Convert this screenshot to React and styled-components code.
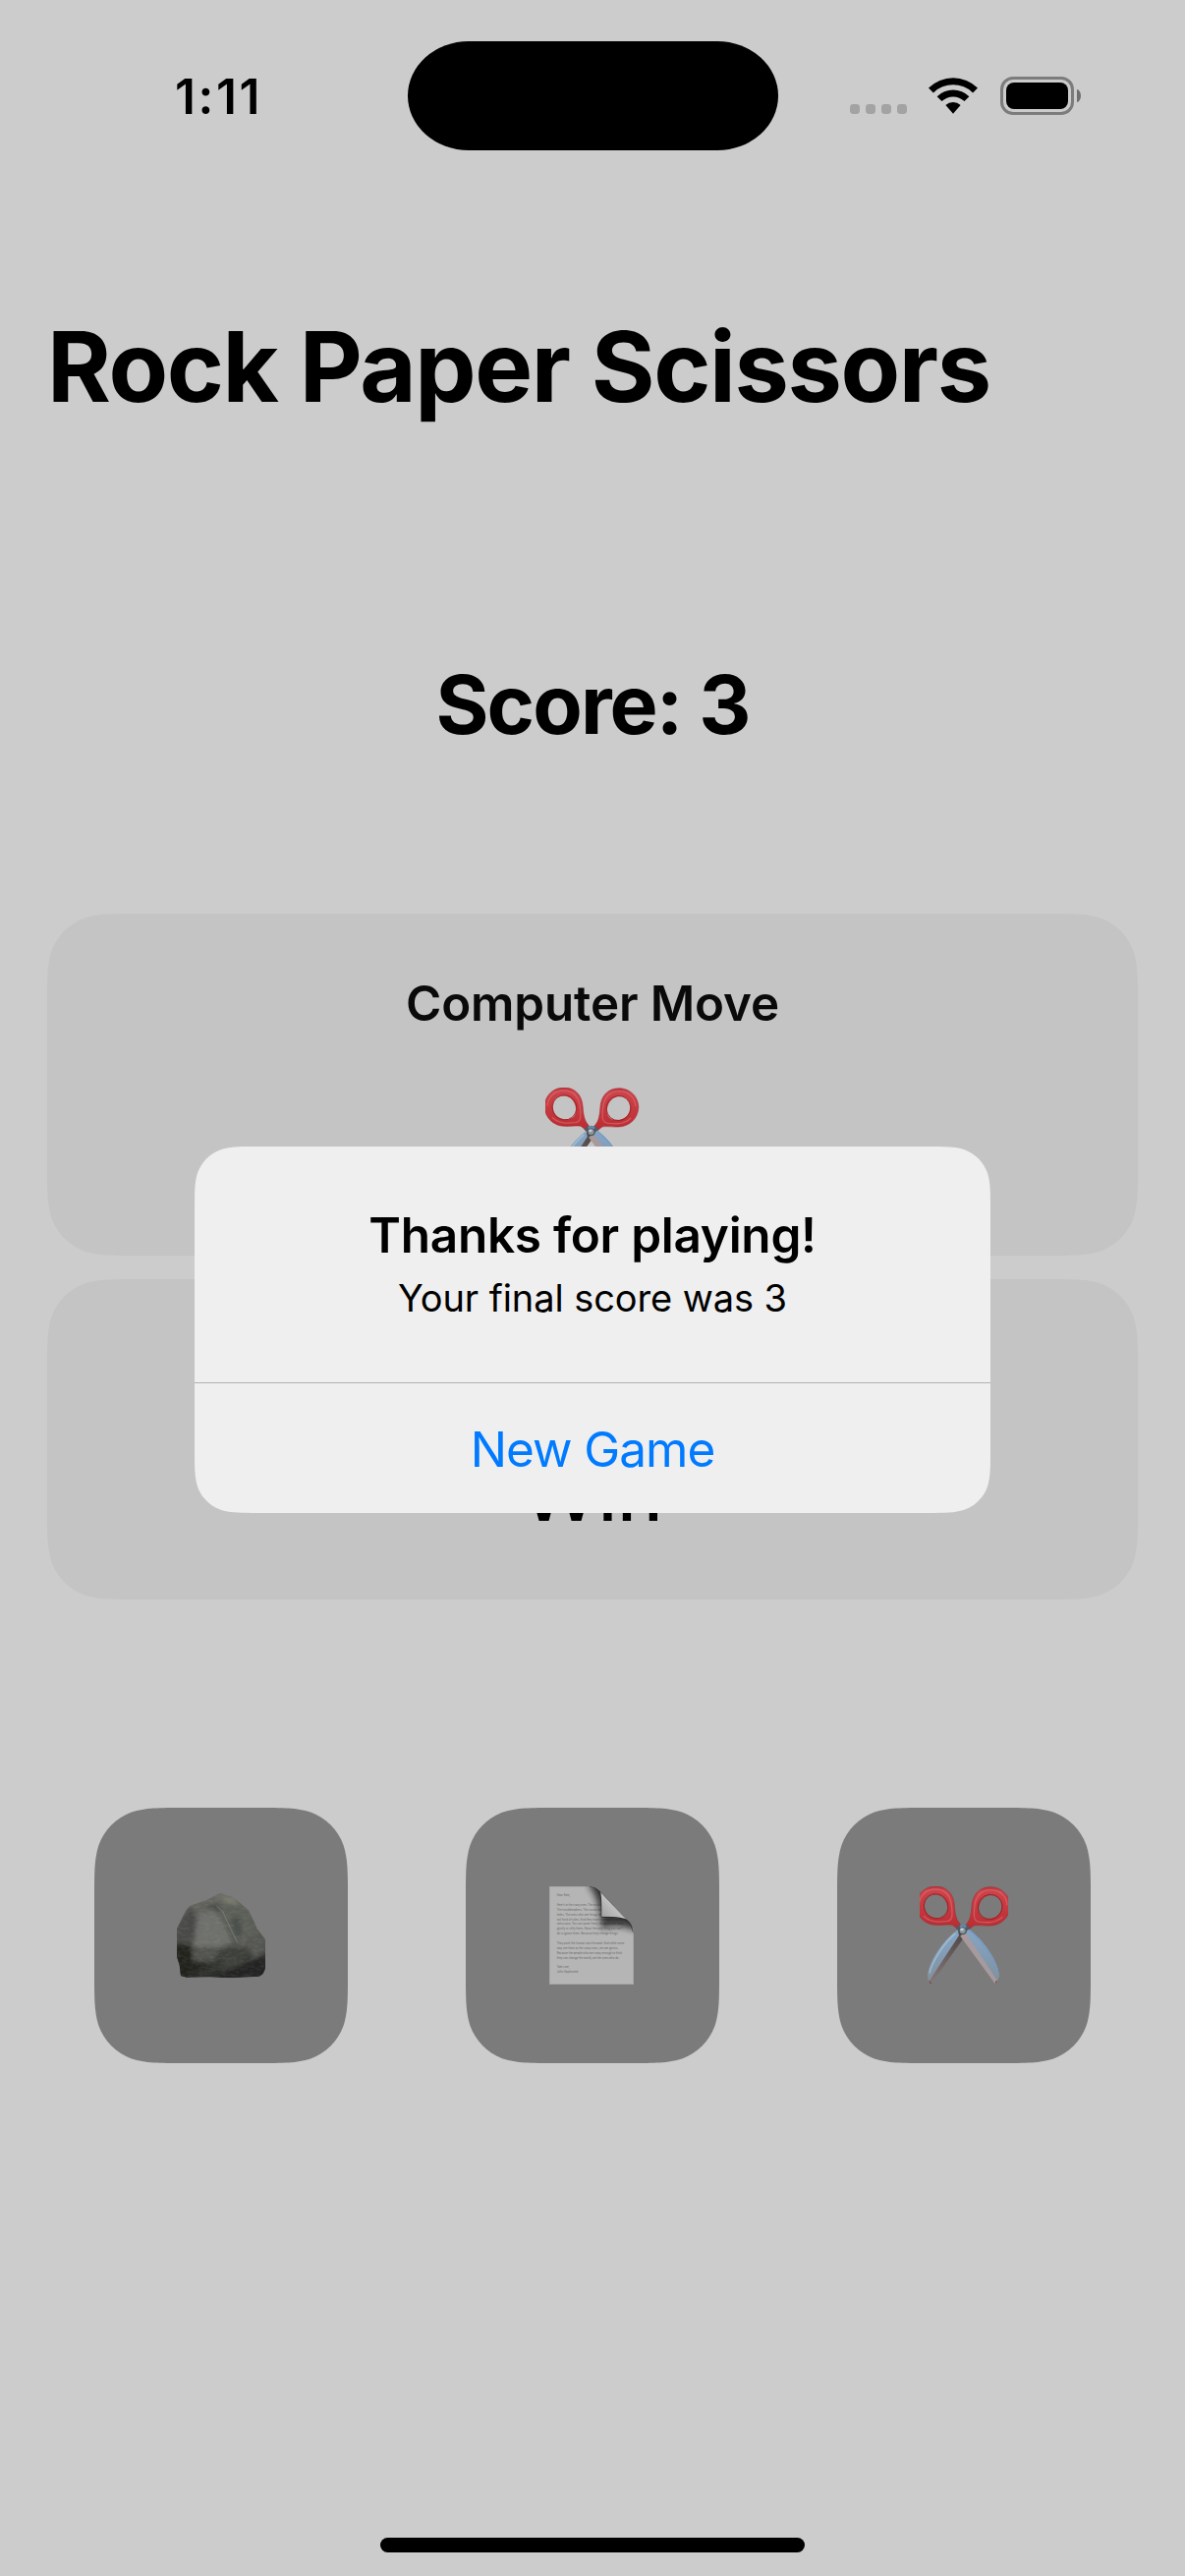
import React from "react";
import styled, { createGlobalStyle, css } from "styled-components";

const GlobalStyle = createGlobalStyle`
  * { box-sizing: border-box; }
  body { margin: 0; background: #cccccc; }
`;

/* Continuous-curvature rounded rectangle, used for every iOS-style surface. */
const squirclePath = (w, h, r) => {
  const k = [1.52866, 1.08849, 0.86841, 0.63149, 0.37282, 0.16906, 0.07491].map((v) => v * r);
  const [a, b, c, d, e, f, g] = k;
  return [
    `M${a} 0L${w - a} 0`,
    `C${w - b} 0 ${w - c} 0 ${w - d} ${g}`,
    `C${w - e} ${f} ${w - f} ${e} ${w - g} ${d}`,
    `C${w} ${c} ${w} ${b} ${w} ${a}`,
    `L${w} ${h - a}`,
    `C${w} ${h - b} ${w} ${h - c} ${w - g} ${h - d}`,
    `C${w - f} ${h - e} ${w - e} ${h - f} ${w - d} ${h - g}`,
    `C${w - c} ${h} ${w - b} ${h} ${w - a} ${h}`,
    `L${a} ${h}`,
    `C${b} ${h} ${c} ${h} ${d} ${h - g}`,
    `C${e} ${h - f} ${f} ${h - e} ${g} ${h - d}`,
    `C0 ${h - c} 0 ${h - b} 0 ${h - a}`,
    `L0 ${a}`,
    `C0 ${b} 0 ${c} ${g} ${d}`,
    `C${f} ${e} ${e} ${f} ${d} ${g}`,
    `C${c} 0 ${b} 0 ${a} 0Z`,
  ].join("");
};

const squircle = (w, h, r) => css`
  width: ${w}px;
  height: ${h}px;
  clip-path: path("${squirclePath(w, h, r)}");
`;

const Screen = styled.div`
  position: relative;
  display: flex;
  flex-direction: column;
  width: 1206px;
  height: 2622px;
  overflow: hidden;
  background: #cccccc;
  color: #000;
  font-family: Inter, "Liberation Sans", sans-serif;
`;

const StatusBar = styled.header`
  display: grid;
  grid-template-columns: 414.5px 377px 1fr;
  align-items: center;
  height: 111px;
  margin-top: 42px;
`;

const Clock = styled.div`
  padding-left: 178px;
  font-size: 49.5px;
  font-weight: 600;
  line-height: 60px;
  letter-spacing: 2.6px;
`;

const Island = styled.div`
  height: 111px;
  background: #000;
  border-radius: 62px / 55.5px;
`;

const StatusIcons = styled.div`
  display: flex;
  align-items: flex-end;
  height: 39px;
  padding-left: 73.5px;
`;

const SignalDots = styled.div`
  display: flex;
  gap: 6px;
  margin: 0 21px 1px 0;
`;

const Dot = styled.i`
  width: 10px;
  height: 10px;
  border-radius: 3.4px;
  background: #a3a3a3;
`;

const WifiIcon = styled.svg`
  width: 52px;
  height: 39px;
  margin: 0 22px 0 0;
  display: block;
`;

const Battery = styled.div`
  width: 75px;
  height: 39px;
  padding: 3px;
  border: 3px solid #7c7c7c;
  border-radius: 13px;
`;

const BatteryLevel = styled.div`
  height: 27px;
  border-radius: 8px;
  background: #000;
`;

const BatteryNub = styled.div`
  width: 4px;
  height: 13px;
  margin: 0 0 13px 3px;
  border-radius: 0 4px 4px 0 / 0 6.5px 6.5px 0;
  background: #6f6f6f;
`;

const Title = styled.h1`
  margin: 160px 0 0 48px;
  font-size: 99px;
  font-weight: 700;
  line-height: 120px;
  letter-spacing: -1.4px;
  white-space: nowrap;
`;

const Score = styled.h2`
  margin: 234px 0 0;
  font-size: 82.5px;
  font-weight: 700;
  line-height: 100px;
  letter-spacing: -1.9px;
  text-align: center;
`;

const Cards = styled.main`
  display: flex;
  flex-direction: column;
  align-items: center;
  gap: 24px;
  margin-top: 163px;
`;

const Card = styled.section`
  display: flex;
  flex-direction: column;
  align-items: center;
  background: #c4c4c4;
  color: #0a0a0a;
  ${({ $height }) => squircle(1110, $height, 60)}
`;

const CardLabel = styled.div`
  margin-top: 61px;
  font-size: 49.3px;
  font-weight: 600;
  line-height: 60px;
  letter-spacing: -0.1px;
`;

const CardGlyph = styled.div`
  display: flex;
  margin-top: 56px;
`;

const Outcome = styled.div`
  margin-top: 168px;
  font-size: 77px;
  font-weight: 500;
  line-height: 100px;
  color: #000;
`;

const Moves = styled.nav`
  display: flex;
  justify-content: space-between;
  padding: 0 96px;
  margin-top: 212px;
`;

const MoveButton = styled.button`
  display: flex;
  align-items: center;
  justify-content: center;
  padding: 0;
  border: 0;
  background: #7b7b7b;
  ${squircle(258, 260, 60)}
`;

const HomeIndicator = styled.div`
  width: 432px;
  height: 15px;
  margin: auto auto 24px;
  border-radius: 7.5px;
  background: #000;
`;

const Overlay = styled.div`
  position: absolute;
  inset: 0;
  display: flex;
  justify-content: center;
  align-items: flex-start;
  padding-top: 1167px;
`;

const Alert = styled.div`
  display: flex;
  flex-direction: column;
  text-align: center;
  background: #efefef;
  ${squircle(810, 373, 42)}
`;

const AlertBody = styled.div`
  height: 240px;
  padding-top: 60px;
`;

const AlertTitle = styled.div`
  font-size: 49.5px;
  font-weight: 600;
  line-height: 60px;
  letter-spacing: -0.27px;
`;

const AlertMessage = styled.div`
  margin-top: 9px;
  font-size: 38px;
  line-height: 50px;
  letter-spacing: -0.08px;
`;

const AlertAction = styled.button`
  flex: 1;
  padding: 1px 0 0;
  border: 0;
  border-top: 1px solid #b0b1b0;
  background: transparent;
  color: #007aff;
  font: 400 49.5px/60px Inter, "Liberation Sans", sans-serif;
  letter-spacing: -1px;
`;

const Glyph = styled.svg`
  display: block;
  width: ${({ $w }) => $w}px;
  height: 100px;
  margin-right: ${({ $nudge }) => $nudge || 0}px;
`;

const HANDLE =
  "M412 415C402 405 396 392 394 360C392 322 370 300 336 300C301 300 277 328 277 358C278 392 304 417 338 418C358 419 376 415 388 418L402 429Z" +
  "M342 398C318 397 301 380 301 356C302 337 316 323 335 324C356 325 371 341 374 364C376 384 365 399 342 398Z";

function Scissors({ id, wide }) {
  return (
    <Glyph $w={wide ? 96 : 90} viewBox={wide ? "279.5 300 288 300" : "288 300 270 300"}>
      <defs>
        <linearGradient id={`${id}r`} x1="0" y1="0" x2="0" y2="1">
          <stop offset="0" stopColor="#b8343a" />
          <stop offset=".1" stopColor="#cc444b" />
          <stop offset=".6" stopColor="#c3363d" />
          <stop offset="1" stopColor="#b92c32" />
        </linearGradient>
        <linearGradient id={`${id}b`} x1="0" y1="0" x2="0" y2="1">
          <stop offset="0" stopColor="#86a5c4" />
          <stop offset=".5" stopColor="#829cb4" />
          <stop offset="1" stopColor="#82909c" />
        </linearGradient>
        <linearGradient id={`${id}d`} x1="1" y1="0" x2="0" y2="1">
          <stop offset="0" stopColor="#4d4444" />
          <stop offset="1" stopColor="#8a7b7b" />
        </linearGradient>
      </defs>
      <path d="M408 432L424 455L322 599L312 585Z" fill={`url(#${id}d)`} />
      <path d="M404 433C362 462 315 530 312 572Q311 582 317 589L408 450Z" fill={`url(#${id}b)`} />
      <path d="M397 444C362 472 325 532 318 565" fill="none" stroke="#a9c3d6" strokeWidth="5" opacity=".7" />
      <path d="M436 430C478 458 529 530 530 575L520 600L412 452Z" fill="#a79a9d" />
      <path d="M436 430C478 458 529 530 530 572Q529 580 524 587L428 442Z" fill={`url(#${id}b)`} />
      <path d="M439 434C479 465 522 530 527 570" fill="none" stroke="#6e9bcc" strokeWidth="4" opacity=".75" />
      <path d="M519 590L525 588L520 600ZM316 587L324 594L321 599Z" fill="#6d4a50" />
      {[undefined, "matrix(-1 0 0 1 841 2)"].map((t, i) => (
        <g key={i} transform={t}>
          <path d={HANDLE} fill={`url(#${id}r)`} fillRule="evenodd" stroke="#a0272d" strokeWidth="1.5" />
          <path
            d="M286 356C287 329 308 309 335 309C365 309 383 329 386 364C388 388 389 405 370 407C350 409 320 412 300 391"
            fill="none" stroke="#e27a80" strokeWidth="4" opacity=".5"
          />
          <ellipse cx="338" cy="361" rx="37" ry="38" transform="rotate(-18 338 361)" fill="none" stroke="#a31d21" strokeWidth="2.5" />
        </g>
      ))}
      <path d="M398 428L408 418L420 417L433 418L443 428L432 436L408 437Z" fill="#505b68" />
      <path d="M410 420Q420 413 431 420L428 430H412Z" fill="#6687a8" />
      <circle cx="420" cy="436" r="11.5" fill="#4b5055" />
      <circle cx="419" cy="435" r="9" fill="#8b979f" />
      <ellipse cx="417" cy="432" rx="5" ry="3.5" fill="#c5cfd5" />
    </Glyph>
  );
}

function Rock() {
  return (
    <Glyph $w={90} viewBox="300 300 270 300">
      <defs>
        <linearGradient id="rk" x1="0" y1="0" x2="0" y2="1">
          <stop offset="0" stopColor="#6c6d66" />
          <stop offset=".3" stopColor="#5c5e59" />
          <stop offset=".6" stopColor="#50524e" />
          <stop offset=".68" stopColor="#3a3c38" />
          <stop offset="1" stopColor="#2a2b28" />
        </linearGradient>
        <clipPath id="rc">
          <path d="M300 430L322 385Q332 364 345 358L390 342L425 324Q436 319 446 326L470 332L490 348L518 372L532 400L545 430L570 462V548Q566 570 550 575L465 580L400 577L330 578L312 573L308 540L300 515Z" />
        </clipPath>
        <filter id="soft" x="-20%" y="-20%" width="140%" height="140%"><feGaussianBlur stdDeviation="6" /></filter>
        <filter id="grain" x="0" y="0" width="100%" height="100%">
          <feTurbulence type="fractalNoise" baseFrequency=".06 .12" numOctaves="2" seed="8" />
          <feColorMatrix values="0 0 0 0 .6  0 0 0 0 .61  0 0 0 0 .57  1.4 0 0 0 -.55" />
        </filter>
      </defs>
      <g clipPath="url(#rc)">
        <rect x="300" y="300" width="270" height="300" fill="url(#rk)" />
        <g filter="url(#soft)">
          <path d="M300 425L340 362L365 400L352 480L300 478Z" fill="#484a47" />
          <path d="M365 385L420 370L470 470L430 488L350 485Z" fill="#6e706c" />
          <path d="M385 362L425 350L440 385L410 375Z" fill="#4b4d48" />
          <path d="M425 355L470 345L518 385L548 440L500 485L480 470Z" fill="#5b5e58" />
          <path d="M465 400L490 390L500 440L482 460Z" fill="#4a4d48" />
          <path d="M430 330L475 335L490 355L450 352Z" fill="#7b7d70" />
          <path d="M505 450L560 455L572 500L530 520Z" fill="#555753" />
          <path d="M295 475L345 480L345 535L400 540L330 580L295 580Z" fill="#20211f" />
          <path d="M348 494L430 492L415 528L350 526Z" fill="#535550" />
          <path d="M430 495L520 490L500 550L440 560Z" fill="#3d3f3a" />
          <path d="M540 525L575 510V580H400L430 565Z" fill="#232422" />
        </g>
        <path d="M421 360L440 377L462 425L485 472" fill="none" stroke="#85877b" strokeWidth="3" opacity=".7" />
        <rect x="300" y="300" width="270" height="300" filter="url(#grain)" opacity=".16" />
      </g>
    </Glyph>
  );
}

const LETTER = [
  [331, 41, "Dear Kate,"],
  [360, 182, "Here's to the crazy ones. The misfits. The rebels."],
  [374.5, 198, "The troublemakers. The round pegs in the square"],
  [389, 200, "holes. The ones who see things differently. They're"],
  [403.5, 204, "not fond of rules. And they have no respect for the"],
  [418, 206, "status quo. You can quote them, disagree with them,"],
  [433, 202, "glorify or vilify them. About the only thing you can't"],
  [447.5, 188, "do is ignore them. Because they change things."],
  [477, 206, "They push the human race forward. And while some"],
  [492, 188, "may see them as the crazy ones, we see genius."],
  [506, 199, "Because the people who are crazy enough to think"],
  [521, 191, "they can change the world, are the ones who do."],
  [550, 39, "Take care,"],
  [565, 65, "John Appleseed"],
];

const LetterLine = styled.text`
  font-family: Inter, sans-serif;
  font-size: 9.5px;
  font-weight: 400;
  fill: #666666;
`;

function Paper() {
  return (
    <Glyph $w={86} $nudge={2} viewBox="297 300 258 300">
      <defs>
        <clipPath id="pc">
          <path d="M297 300H420Q440 300 456 318L530 398Q555 415 555 440V600H297Z" />
        </clipPath>
        <linearGradient id="pf" x1="0" y1="1" x2="1" y2="0">
          <stop offset="0" stopColor="#9d9d9d" />
          <stop offset=".45" stopColor="#bebebe" />
          <stop offset="1" stopColor="#a5a5a5" />
        </linearGradient>
        <filter id="ps" x="-30%" y="-30%" width="160%" height="160%"><feGaussianBlur stdDeviation="9" /></filter>
      </defs>
      <g clipPath="url(#pc)">
        <rect x="297" y="300" width="258" height="300" fill="#b5b5b5" />
        <rect x="298.5" y="301" width="255" height="297.5" fill="none" stroke="#a6a6a6" strokeWidth="3" />
        {LETTER.map(([y, w, t]) => (
          <LetterLine key={y} x="320" y={y} textLength={w} lengthAdjust="spacingAndGlyphs">{t}</LetterLine>
        ))}
        <path d="M418 290L470 300L560 400V436Q510 412 456 428Q452 340 418 300Z" fill="#1c1c1c" opacity=".8" filter="url(#ps)" />
        <path d="M420 300Q455 304 456 350V394H500Q545 396 553 440" fill="none" stroke="#202020" strokeWidth="3" opacity=".6" />
      </g>
      <path d="M456 320L531 400Q515 394 490 393L457 392Q458 345 454 317Z" fill="url(#pf)" />
    </Glyph>
  );
}

function Wifi() {
  return (
    <WifiIcon viewBox="0 0 52 39">
      <path d="M1 11.6A35.5 35.5 0 0 1 51 11.6L46.1 16.4A28.8 28.8 0 0 0 5.9 16.4Z" />
      <path d="M9.6 20.3A23.4 23.4 0 0 1 42.4 20.3L37.5 25.1A16.5 16.5 0 0 0 14.5 25.1Z" />
      <path d="M18.4 29.1A11 11 0 0 1 33.6 29.1L26 37.8Z" strokeLinejoin="round" />
    </WifiIcon>
  );
}

export default function App() {
  return (
    <Screen>
      <GlobalStyle />
      <StatusBar>
        <Clock>1:11</Clock>
        <Island />
        <StatusIcons>
          <SignalDots><Dot /><Dot /><Dot /><Dot /></SignalDots>
          <Wifi />
          <Battery><BatteryLevel /></Battery>
          <BatteryNub />
        </StatusIcons>
      </StatusBar>
      <Title>Rock Paper Scissors</Title>
      <Score>Score: 3</Score>
      <Cards>
        <Card $height={348}>
          <CardLabel>Computer Move</CardLabel>
          <CardGlyph><Scissors id="cs" wide /></CardGlyph>
        </Card>
        <Card $height={326}>
          <Outcome>Win</Outcome>
        </Card>
      </Cards>
      <Moves>
        <MoveButton aria-label="Rock"><Rock /></MoveButton>
        <MoveButton aria-label="Paper"><Paper /></MoveButton>
        <MoveButton aria-label="Scissors"><Scissors id="ms" /></MoveButton>
      </Moves>
      <HomeIndicator />
      <Overlay>
        <Alert role="alertdialog">
          <AlertBody>
            <AlertTitle>Thanks for playing!</AlertTitle>
            <AlertMessage>Your final score was 3</AlertMessage>
          </AlertBody>
          <AlertAction>New Game</AlertAction>
        </Alert>
      </Overlay>
    </Screen>
  );
}
